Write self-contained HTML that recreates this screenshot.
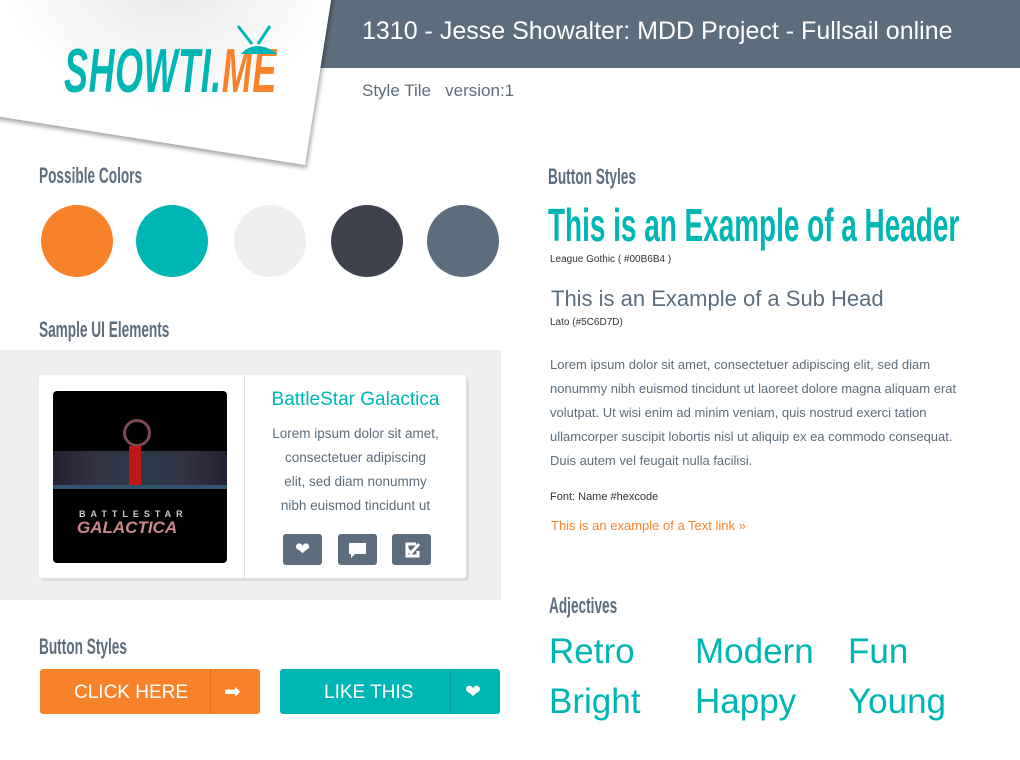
<!DOCTYPE html>
<html><head><meta charset="utf-8"><style>
*{margin:0;padding:0;box-sizing:border-box}
body{width:1020px;height:760px;background:#fff;position:relative;overflow:hidden;font-family:"Liberation Sans",sans-serif;color:#5C6D7D}
.abs{position:absolute}
.lg{font-family:"Liberation Sans Narrow","Liberation Sans",sans-serif;font-weight:bold;transform-origin:left top;white-space:nowrap}
.h2{font-size:22px;transform:scaleX(.62)}
.lato{font-family:"Liberation Sans",sans-serif}
</style></head><body>
<div class="abs" style="left:320px;top:0;width:700px;height:68px;background:#5C6D7D"></div>
<div class="abs" style="left:362px;top:17px;font-size:25px;color:#fff;white-space:nowrap">1310 - Jesse Showalter: MDD Project - Fullsail online</div>
<div class="abs" style="left:362px;top:81px;font-size:17px;color:#5C6D7D">Style Tile &nbsp;&nbsp;version:1</div>
<div class="abs" style="left:-67px;top:-55px;width:372px;height:220px;background:radial-gradient(ellipse at 55% 20%,#e6e6e8,#fff 60%);transform:rotate(9deg);transform-origin:100% 100%;box-shadow:2px 3px 4px rgba(0,0,0,.35)"></div>
<div class="abs lg" style="left:64px;top:36px;font-size:62px;color:#00B6B4;font-style:italic;transform:scaleX(.58);letter-spacing:1px">SHOWTI.<span style="color:#F7822A">ME</span></div>
<svg class="abs" style="left:236px;top:24px" width="50" height="30"><path d="M2 2 L16 20 M34 2 L22 20" stroke="#00B6B4" stroke-width="3"/><path d="M5 30 Q19 14 42 30Z" fill="#00B6B4"/></svg>

<div class="abs lg h2" style="left:39px;top:163px">Possible Colors</div>
<div class="abs" style="left:41px;top:205px;width:72px;height:72px;border-radius:50%;background:#F7822A"></div>
<div class="abs" style="left:136px;top:205px;width:72px;height:72px;border-radius:50%;background:#00B6B4"></div>
<div class="abs" style="left:234px;top:205px;width:72px;height:72px;border-radius:50%;background:#EFEFEF"></div>
<div class="abs" style="left:331px;top:205px;width:72px;height:72px;border-radius:50%;background:#3D424D"></div>
<div class="abs" style="left:427px;top:205px;width:72px;height:72px;border-radius:50%;background:#5C6D7D"></div>

<div class="abs lg h2" style="left:39px;top:317px">Sample UI Elements</div>
<div class="abs" style="left:0;top:350px;width:501px;height:250px;background:#EFEFEF"></div>
<div class="abs" style="left:39px;top:375px;width:427px;height:203px;background:#fff;border-radius:3px;box-shadow:3px 3px 0 #dcdcdc"></div>
<div class="abs" style="left:244px;top:375px;width:1px;height:203px;background:#e3e3e3"></div>
<div class="abs" style="left:53px;top:391px;width:174px;height:172px;background:#000;border-radius:4px;overflow:hidden">
 <div class="abs" style="left:70px;top:28px;width:28px;height:28px;border-radius:50%;border:3px solid #7a4a50"></div>
 <div class="abs" style="left:0;top:60px;width:174px;height:35px;background:linear-gradient(90deg,#223,#334,#2a3a4a,#334,#223)"></div>
 <div class="abs" style="left:76px;top:55px;width:12px;height:40px;background:#c01818"></div>
 <div class="abs" style="left:0;top:94px;width:174px;height:4px;background:#2f5570"></div>
 <div class="abs" style="left:26px;top:118px;font-size:9px;color:#ccc;letter-spacing:5px;font-weight:bold">BATTLESTAR</div>
 <div class="abs" style="left:24px;top:127px;font-size:17px;color:#c88;font-weight:bold;font-style:italic">GALACTICA</div>
</div>
<div class="abs lato" style="left:245px;top:389px;width:221px;text-align:center;font-size:19px;color:#00B6B4">BattleStar Galactica</div>
<div class="abs lato" style="left:245px;top:422px;width:221px;text-align:center;font-size:13.5px;line-height:24px">Lorem ipsum dolor sit amet,<br>consectetuer adipiscing<br>elit, sed diam nonummy<br>nibh euismod tincidunt ut</div>
<div class="abs" style="left:283px;top:534px;width:39px;height:31px;background:#5C6D7D;border-radius:3px;color:#fff;text-align:center;font-size:18px;line-height:31px">❤</div>
<div class="abs" style="left:338px;top:534px;width:39px;height:31px;background:#5C6D7D;border-radius:3px"><svg width="39" height="31"><path d="M11 9h17v11H17l-4 4v-4h-2z" fill="#fff"/></svg></div>
<div class="abs" style="left:392px;top:534px;width:39px;height:31px;background:#5C6D7D;border-radius:3px"><svg width="39" height="31"><path d="M24 10h-9v12h11v-5" stroke="#fff" stroke-width="3" fill="none"/><path d="M15 15l4 4 8-9" stroke="#fff" stroke-width="3" fill="none"/></svg></div>

<div class="abs lg h2" style="left:39px;top:634px">Button Styles</div>
<div class="abs lato" style="left:40px;top:669px;width:220px;height:45px;background:#F7822A;border-radius:3px;color:#fff;font-size:19px;line-height:47px"><span style="position:absolute;left:34px">CLICK HERE</span><span style="position:absolute;left:170px;top:0;width:1px;height:45px;background:#e06d18"></span><span style="position:absolute;left:184px;font-size:20px">➡</span></div>
<div class="abs lato" style="left:280px;top:669px;width:220px;height:45px;background:#00B6B4;border-radius:3px;color:#fff;font-size:19px;line-height:47px"><span style="position:absolute;left:44px">LIKE THIS</span><span style="position:absolute;left:170px;top:0;width:1px;height:45px;background:#00a09e"></span><span style="position:absolute;left:185px;font-size:19px">❤</span></div>

<div class="abs lg h2" style="left:548px;top:164px">Button Styles</div>
<div class="abs lg" style="left:548px;top:198px;font-size:46px;color:#00B6B4;transform:scaleX(.607)">This is an Example of a Header</div>
<div class="abs" style="left:550px;top:254px;font-size:10px;color:#333">League Gothic ( #00B6B4 )</div>
<div class="abs lato" style="left:551px;top:286px;font-size:22px">This is an Example of a Sub Head</div>
<div class="abs" style="left:550px;top:317px;font-size:10px;color:#333">Lato (#5C6D7D)</div>
<div class="abs lato" style="left:550px;top:353px;width:428px;font-size:13px;line-height:24px">Lorem ipsum dolor sit amet, consectetuer adipiscing elit, sed diam nonummy nibh euismod tincidunt ut laoreet dolore magna aliquam erat volutpat. Ut wisi enim ad minim veniam, quis nostrud exerci tation ullamcorper suscipit lobortis nisl ut aliquip ex ea commodo consequat. Duis autem vel feugait nulla facilisi.</div>
<div class="abs" style="left:550px;top:491px;font-size:11px;color:#333">Font: Name #hexcode</div>
<div class="abs lato" style="left:551px;top:518px;font-size:13px;color:#F7822A">This is an example of a Text link »</div>

<div class="abs lg h2" style="left:549px;top:593px">Adjectives</div>
<div class="abs lato" style="left:549px;top:627px;font-size:35px;color:#00B6B4;line-height:50px">Retro<br>Bright</div>
<div class="abs lato" style="left:695px;top:627px;font-size:35px;color:#00B6B4;line-height:50px">Modern<br>Happy</div>
<div class="abs lato" style="left:848px;top:627px;font-size:35px;color:#00B6B4;line-height:50px">Fun<br>Young</div>
</body></html>
